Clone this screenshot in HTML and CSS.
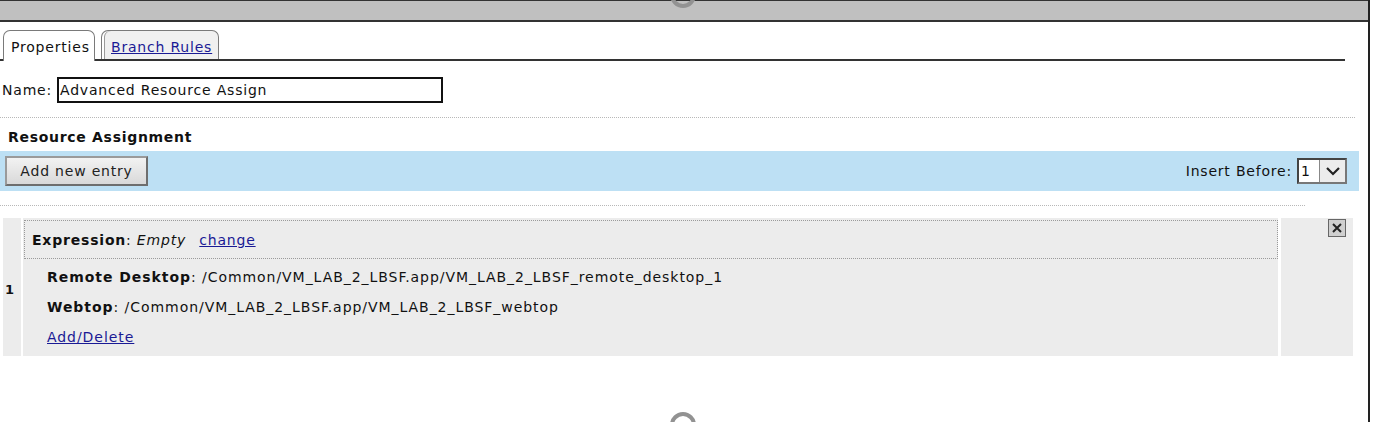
FILE: index.html
```html
<!DOCTYPE html>
<html>
<head>
<meta charset="utf-8">
<title>Advanced Resource Assign</title>
<link rel="stylesheet" href="styles.css">
</head>
<body>
<div class="frame">
  <div class="topbar"></div>
  <div class="ring ring-top"></div>

  <div class="tabs">
    <div class="tab tab-active">Properties</div>
    <div class="tab tab-idle"><a href="#">Branch Rules</a></div>
  </div>

  <div class="name-row">
    <span class="name-label">Name:</span>
    <div class="text-input">Advanced Resource Assign</div>
  </div>

  <div class="dots dots-wide"></div>

  <div class="section-title">Resource Assignment</div>

  <div class="toolbar">
    <div class="btn">Add new entry</div>
    <div class="insert">
      <span class="insert-label">Insert Before:</span>
      <div class="select">
        <span class="select-value">1</span>
        <span class="select-btn">
          <svg width="16" height="10" viewBox="0 0 16 10"><path d="M2 2 L8 8 L14 2" fill="none" stroke="#222" stroke-width="2.2"/></svg>
        </span>
      </div>
    </div>
  </div>

  <div class="dots dots-short"></div>

  <div class="entry">
    <div class="entry-num">1</div>
    <div class="entry-body">
      <div class="expr"><b>Expression</b>: <i>Empty</i> <a href="#" class="expr-link">change</a></div>
      <div class="lines">
        <div class="line"><b>Remote Desktop</b>: /Common/VM_LAB_2_LBSF.app/VM_LAB_2_LBSF_remote_desktop_1</div>
        <div class="line"><b>Webtop</b>: /Common/VM_LAB_2_LBSF.app/VM_LAB_2_LBSF_webtop</div>
        <div class="line"><a href="#">Add/Delete</a></div>
      </div>
    </div>
    <div class="entry-del">
      <span class="close">
        <svg width="16" height="16" viewBox="0 0 16 16"><path d="M4 4 L12 12 M12 4 L4 12" stroke="#222" stroke-width="2"/></svg>
      </span>
    </div>
  </div>

  <div class="ring ring-bottom"></div>
</div>
</body>
</html>
```

FILE: styles.css
```css
html, body {
  margin: 0;
  padding: 0;
  background: #fff;
}

body {
  font-family: "DejaVu Sans", sans-serif;
  font-size: 14px;
  letter-spacing: 0.8px;
  color: #111;
  overflow: hidden;
}

a {
  color: #1a1a95;
  text-decoration: underline;
}

.frame {
  position: relative;
  width: 1368px;
  height: 422px;
  border-right: 2px solid #222;
  overflow: hidden;
}

.topbar {
  height: 19px;
  background: #c0c0c0;
  border-top: 1px solid #333;
  border-bottom: 2px solid #333;
}

.ring {
  position: absolute;
  left: 670px;
  width: 18px;
  height: 18px;
  border: 4px solid #929292;
  border-radius: 50%;
  z-index: 2;
}

.ring-top {
  top: -18px;
}

.ring-bottom {
  top: 412px;
}

/* tabs */
.tabs {
  display: flex;
  align-items: flex-end;
  width: 1345px;
  height: 29px;
  margin-top: 8px;
  border-bottom: 2px solid #333;
}

.tab {
  box-sizing: border-box;
  height: 29px;
  line-height: 32px;
  border: 1px solid #7a7a7a;
  border-bottom: none;
  border-radius: 7px 7px 0 0;
  white-space: nowrap;
}

.tab-active {
  margin-left: 3px;
  width: 92px;
  height: 31px;
  margin-bottom: -2px;
  padding-left: 7px;
  background: #fff;
}

.tab-idle {
  margin-left: 6px;
  width: 118px;
  padding-left: 9px;
  background: #f0f0f0;
  box-shadow: inset 2px 0 0 #fff, inset 3px 0 0 #9a9a9a;
}

/* name */
.name-row {
  display: flex;
  align-items: center;
  margin-top: 16px;
  height: 25px;
}

.name-label {
  margin-left: 2px;
  width: 55px;
}

.text-input {
  box-sizing: border-box;
  width: 386px;
  height: 26px;
  line-height: 22px;
  border: 2px solid #111;
  padding-left: 1px;
  white-space: nowrap;
}

.dots {
  height: 0;
  border-top: 1px dotted #b8b8b8;
}

.dots-wide {
  width: 1355px;
  margin-top: 15px;
}

.dots-short {
  width: 1305px;
  margin-top: 14px;
}

.section-title {
  font-weight: bold;
  letter-spacing: 0.7px;
  margin-left: 8px;
  height: 33px;
  line-height: 38px;
}

/* toolbar */
.toolbar {
  display: flex;
  align-items: center;
  justify-content: space-between;
  width: 1359px;
  height: 40px;
  background: #bde0f4;
}

.btn {
  box-sizing: border-box;
  width: 143px;
  height: 30px;
  margin-left: 5px;
  line-height: 27px;
  text-align: center;
  border: 2px solid #6e6e6e;
  border-top-color: #9a9a9a;
  border-left-color: #9a9a9a;
  background: linear-gradient(#f2f2f2, #d9d9d9);
  color: #222;
  white-space: nowrap;
}

.insert {
  display: flex;
  align-items: center;
  margin-right: 12px;
}

.insert-label {
  margin-right: 5px;
  white-space: nowrap;
}

.select {
  display: flex;
  box-sizing: border-box;
  width: 50px;
  height: 26px;
  border: 2px solid #777;
  border-left-color: #444;
  border-top-color: #444;
  background: #fff;
}

.select-value {
  width: 18px;
  line-height: 22px;
  padding-left: 2px;
}

.select-btn {
  display: flex;
  align-items: center;
  justify-content: center;
  flex: 1;
  background: #ececec;
  border-left: 1px solid #888;
}

/* entry */
.entry {
  display: flex;
  margin-top: 12px;
  margin-left: 3px;
  width: 1350px;
  height: 138px;
}

.entry-num {
  display: flex;
  align-items: center;
  width: 18px;
  padding-left: 2px;
  padding-top: 4px;
  box-sizing: border-box;
  background: #ececec;
  font-weight: bold;
  font-size: 13px;
}

.entry-body {
  width: 1255px;
  margin-left: 2px;
  padding-top: 2px;
  box-sizing: border-box;
  background: #ececec;
}

.expr {
  box-sizing: border-box;
  margin-left: 1px;
  height: 39px;
  line-height: 38px;
  padding-left: 7px;
  border: 1px dotted #9a9a9a;
  white-space: nowrap;
}

.expr-link {
  margin-left: 8px;
}

.lines {
  padding-top: 1px;
}

.line {
  padding-left: 24px;
  height: 30px;
  line-height: 34px;
  letter-spacing: 0.95px;
  white-space: nowrap;
}

.entry-del {
  display: flex;
  justify-content: flex-end;
  align-items: flex-start;
  width: 72px;
  margin-left: 3px;
  padding-top: 1px;
  padding-right: 7px;
  box-sizing: border-box;
  background: #ececec;
}

.close {
  display: flex;
  align-items: center;
  justify-content: center;
  box-sizing: border-box;
  width: 18px;
  height: 18px;
  border: 1px solid #666;
  background: #cfcfcf;
}
```
